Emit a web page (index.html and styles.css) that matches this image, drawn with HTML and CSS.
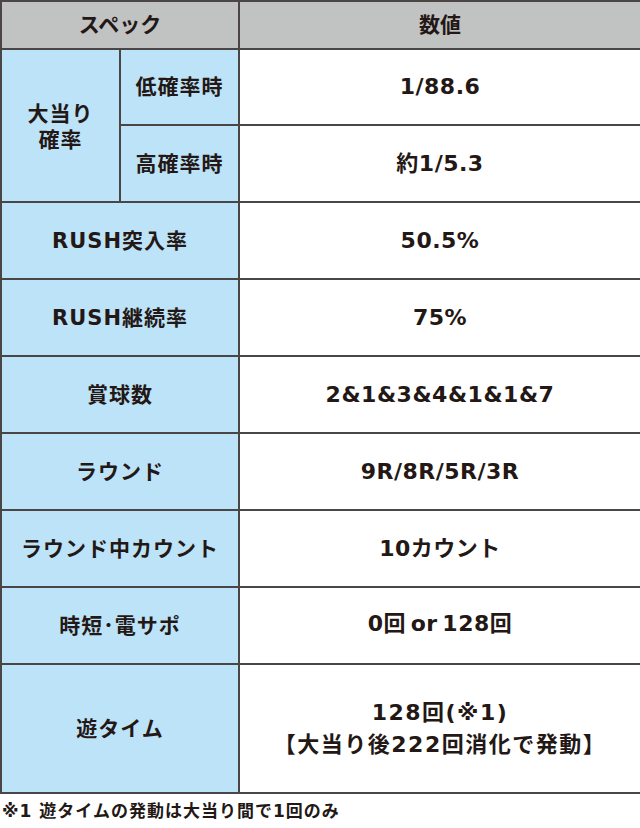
FILE: index.html
```html
<!DOCTYPE html>
<html lang="ja">
<head>
<meta charset="utf-8">
<link rel="stylesheet" href="styles.css">
</head>
<body>
<table class="spec">
  <colgroup>
    <col class="c1"><col class="c2"><col class="c3">
  </colgroup>
  <thead>
    <tr class="head"><th colspan="2">スペック</th><th>数値</th></tr>
  </thead>
  <tbody>
    <tr class="row first"><th rowspan="2" class="lead">大当り<br>確率</th><th>低確率時</th><td>1/88.6</td></tr>
    <tr class="row"><th>高確率時</th><td>約1/5.3</td></tr>
    <tr class="row"><th colspan="2">RUSH突入率</th><td>50.5%</td></tr>
    <tr class="row"><th colspan="2">RUSH継続率</th><td>75%</td></tr>
    <tr class="row"><th colspan="2">賞球数</th><td>2&amp;1&amp;3&amp;4&amp;1&amp;1&amp;7</td></tr>
    <tr class="row"><th colspan="2">ラウンド</th><td>9R/8R/5R/3R</td></tr>
    <tr class="row"><th colspan="2">ラウンド中カウント</th><td>10カウント</td></tr>
    <tr class="row"><th colspan="2">時短･電サポ</th><td>0回<span class="gap"> </span>or<span class="gap"> </span>128回</td></tr>
    <tr class="tall"><th colspan="2">遊タイム</th><td>128回(※1)<br>【大当り後222回消化で発動】</td></tr>
  </tbody>
</table>
<p class="note">※1 遊タイムの発動は大当り間で1回のみ</p>
</body>
</html>
```
FILE: styles.css
```css
html, body {
  margin: 0;
  padding: 0;
  background: #ffffff;
}
body {
  width: 640px;
  font-family: "DejaVu Sans", "Noto Sans CJK JP", sans-serif;
  font-weight: bold;
  color: #231815;
}
.spec {
  width: 640px;
  border-collapse: collapse;
  table-layout: fixed;
}
.c1 { width: 119px; }
.c2 { width: 119px; }
.c3 { width: 402px; }
.spec th, .spec td {
  border: 2px solid #4b4646;
  text-align: center;
  vertical-align: middle;
  padding: 0;
  font-size: 21px;
  line-height: 26px;
  letter-spacing: 1px;
  font-weight: bold;
}
.spec thead th {
  background: #c1c2c2;
  height: 46px;
  letter-spacing: 0;
}
.spec tbody th {
  background: #bde3f8;
}
.spec td {
  background: #ffffff;
  font-size: 22px;
  letter-spacing: 0.5px;
}
.gap { font-size: 12px; }
.row th, .row td { height: 75px; }
.first th, .first td { height: 74px; }
.tall th, .tall td { height: 127px; }
.tall td { line-height: 32px; letter-spacing: 1.5px; }
.lead { padding-top: 2px !important; }
.note {
  margin: 6px 0 0 2px;
  font-size: 17px;
  line-height: 22px;
  font-weight: bold;
  letter-spacing: 1px;
}
```
